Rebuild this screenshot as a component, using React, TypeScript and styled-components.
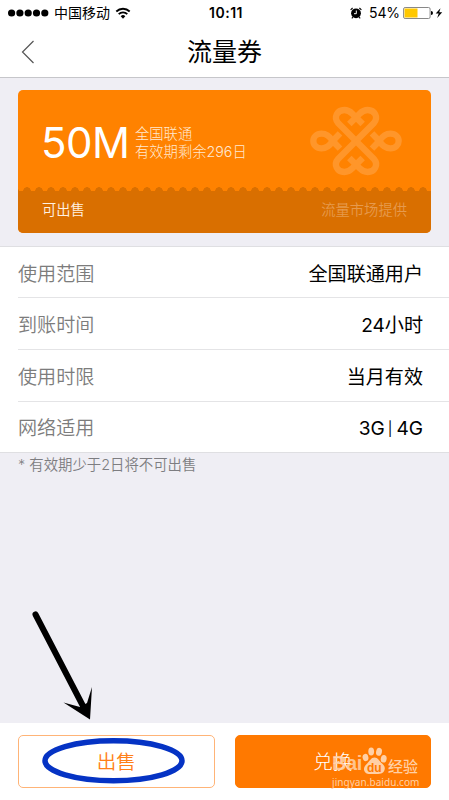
import React from "react";
import styled, { createGlobalStyle } from "styled-components";

const Global = createGlobalStyle`
  * { box-sizing: border-box; }
  body { margin: 0; background: #fff; }
`;

const Screen = styled.div`
  position: relative;
  width: 449px;
  height: 800px;
  overflow: hidden;
  display: flex;
  flex-direction: column;
  background: #efeef4;
  font-family: Inter, "Noto Sans CJK SC", sans-serif;
  color: #000;
  white-space: nowrap;
`;

const Header = styled.header`
  height: 78px;
  flex: none;
  background: #fff;
  border-bottom: 1px solid #c6c6ca;
`;

const StatusBar = styled.div`
  height: 25px;
  display: grid;
  grid-template-columns: 1fr auto 1fr;
  align-items: center;
  padding: 0 6px 0 8px;
  font-size: 14px;
  line-height: 25px;
`;

const Carrier = styled.div`
  display: flex;
  align-items: center;
  gap: 5px;
  height: 25px;
`;

const Clock = styled.div`
  padding-left: 1px;
  font-size: 14px;
  font-weight: 600;
  letter-spacing: 0.5px;
`;

const Power = styled.div`
  display: flex;
  align-items: center;
  justify-content: flex-end;
  height: 25px;
`;

const Percent = styled.span`
  margin: 0 3px 0 7px;
  letter-spacing: -0.1px;
`;

const NavBar = styled.div`
  height: 52px;
  display: grid;
  grid-template-columns: 60px 1fr 60px;
  align-items: center;
  text-align: center;
`;

const Back = styled.button`
  border: 0;
  background: none;
  padding: 0 0 0 21px;
  display: flex;
`;

const Title = styled.h1`
  margin: 0;
  padding-top: 1px;
  font-size: 25px;
  line-height: 52px;
  font-weight: 400;
`;

const Coupon = styled.section`
  margin: 12px 18px 0;
  height: 143px;
  flex: none;
  border-radius: 5px;
  overflow: hidden;
  background: #ff8200;
  color: #fff;
`;

const CouponTop = styled.div`
  height: 97px;
  display: flex;
  align-items: center;
  padding: 9px 29px 0 23px;
`;

const Amount = styled.div`
  width: 94px;
  font-size: 42px;
  line-height: 50px;
  font-weight: 370;
  letter-spacing: -0.5px;
`;

const Details = styled.div`
  flex: 1;
  font-size: 14.3px;
  line-height: 18px;
  font-weight: 300;
  color: #ffe8d0;
`;

const Knot = styled.svg`
  margin-top: -5px;
  flex: none;
`;

const CouponBottom = styled.div`
  height: 46px;
  padding: 7px 24px 0;
  display: flex;
  justify-content: space-between;
  font-size: 14.3px;
  line-height: 31px;
  background: radial-gradient(circle at 6px 4px, #d96f00 3.5px, transparent 4px) 3px 0 / 12px 4px repeat-x,
    linear-gradient(transparent 4px, #d96f00 4px);
`;

const Status = styled.span`
  color: #fff1e2;
  font-weight: 350;
`;

const Provider = styled.span`
  color: #e69a4d;
  font-weight: 350;
`;

const List = styled.dl`
  margin: 13px 0 0;
  height: 207px;
  flex: none;
  display: grid;
  grid-template-rows: 50px 52px 52px 51px;
  padding-left: 18px;
  background: #fff;
  border-top: 1px solid #dfdfe2;
  border-bottom: 1px solid #dfdfe2;
`;

const Row = styled.div`
  display: flex;
  align-items: center;
  justify-content: space-between;
  padding: 3px 26px 0 0;
  font-size: 19.1px;
  line-height: 28px;
  & + & { border-top: 1px solid #e4e4e6; }
  &:last-child { padding-top: 1px; }
`;

const Label = styled.dt`
  color: #7c7c7c;
  font-weight: 350;
`;

const Value = styled.dd`
  margin: 0;
  font-weight: 400;
`;

const Separator = styled.span`
  font-size: 14px;
  line-height: 1;
  margin: 0 4px 0 3px;
  vertical-align: 1px;
`;

const Note = styled.p`
  margin: 0;
  padding: 2px 18px;
  font-size: 14.4px;
  line-height: 20px;
  color: #7d7d81;
  font-weight: 350;
`;

const Footer = styled.footer`
  height: 77px;
  margin-top: auto;
  flex: none;
  display: flex;
  gap: 20px;
  padding: 12px 18px;
  background: #fff;
`;

const Action = styled.button<{ $filled?: boolean }>`
  flex: 1;
  height: 53px;
  padding: 1px 0 0;
  border: 1px solid ${(p) => (p.$filled ? "#ff7900" : "#ffb477")};
  border-radius: 5px;
  background: ${(p) => (p.$filled ? "#ff7900" : "#fff")};
  color: ${(p) => (p.$filled ? "#fff" : "#ff7f18")};
  font: ${(p) => (p.$filled ? 300 : 350)} 19.5px/50px Inter, "Noto Sans CJK SC", sans-serif;
`;

const Arrow = styled.svg`
  position: absolute;
  left: 30px;
  top: 605px;
`;

const Ring = styled.svg`
  position: absolute;
  left: 40px;
  top: 735px;
`;

const Watermark = styled.div`
  position: absolute;
  left: 332px;
  top: 743px;
  width: 90px;
  color: #ffd0a6;
`;

const Brand = styled.div`
  height: 32px;
  display: flex;
  align-items: flex-end;
  font: 700 20px/23px "Liberation Sans", sans-serif;
`;

const BrandName = styled.span`
  width: 30px;
  opacity: 0.85;
  letter-spacing: -0.4px;
`;

const BrandSuffix = styled.span`
  margin-left: 1px;
  font: 500 15px/19px "Noto Sans CJK SC", sans-serif;
`;

const Site = styled.div`
  margin-top: 1px;
  font: 400 10px/12px "Noto Sans", sans-serif;
  letter-spacing: 0.05px;
`;

const rows: [string, React.ReactNode][] = [
  ["使用范围", "全国联通用户"],
  ["到账时间", "24小时"],
  ["使用时限", "当月有效"],
  ["网络适用", <>3G<Separator>|</Separator>4G</>],
];

function SignalDots() {
  return (
    <svg width="41" height="8" viewBox="0 0 41 8">
      {[3.6, 11.9, 20.2, 28.5, 36.8].map((x) => (
        <circle key={x} cx={x} cy="4" r="3.6" />
      ))}
    </svg>
  );
}

function Wifi() {
  return (
    <svg width="16" height="12" viewBox="0 0 15 12" fill="none" stroke="#000" strokeWidth="1.8">
      <path d="M.8 4.5a9.5 9.5 0 0 1 13.4 0M3.2 7.1a6.1 6.1 0 0 1 8.6 0" />
      <path d="M5.2 9.2a3.3 3.3 0 0 1 4.6 0L7.5 11.7z" fill="#000" stroke="none" />
    </svg>
  );
}

function Alarm() {
  return (
    <svg width="12" height="12" viewBox="0 0 12 12">
      <circle cx="6" cy="6.3" r="4.9" />
      <path d="M.6 2.8 2.6 1M9.4 1l2 1.8M3 10 1.8 11.4M9 10l1.2 1.4" stroke="#000" strokeWidth="1.1" />
      <path d="M6.3 3.5v3.2H4" fill="none" stroke="#fff" strokeWidth="1" />
    </svg>
  );
}

function Battery() {
  return (
    <svg width="40" height="14" viewBox="0 0 40 14">
      <rect x=".6" y="1.5" width="26.5" height="11" rx="1.5" fill="#fff" stroke="#888" />
      <rect x="1.5" y="2.5" width="13" height="9" fill="#ffc800" />
      <path d="M28 5q2 0 2 2t-2 2z" />
      <path d="M37.5 2.2 32.7 7.6h3L34.2 12l5-5.7h-3z" />
    </svg>
  );
}

function Unicom() {
  return (
    <Knot width="92" height="70" viewBox="44 65 276 210" fill="none" stroke="#ff962a" strokeWidth="19">
      <path d="M182 170 129 117C113 99 126 77 147 77C158 77 165 82 171 88L202 119" />
      <path d="M182 170 235 117C251 99 238 77 217 77C206 77 199 82 193 88L162 119" />
      <path d="M182 170 129 223C113 241 126 263 147 263C158 263 165 258 171 252L202 221" />
      <path d="M182 170 235 223C251 241 238 263 217 263C206 263 199 258 193 252L162 221" />
      <path d="M134 193 112 170Q98 148 79 148C63 148 54 159 54 170S63 192 79 192Q98 192 112 170L134 147" />
      <path d="M230 193 252 170Q266 148 285 148C301 148 310 159 310 170S301 192 285 192Q266 192 252 170L230 147" />
    </Knot>
  );
}

function Paw() {
  return (
    <svg width="25" height="28" viewBox="0 0 25 28" fill="currentColor">
      <ellipse cx="3.5" cy="10.5" rx="2.9" ry="3.7" transform="rotate(-12 3.5 10.5)" />
      <ellipse cx="9.2" cy="4.5" rx="2.9" ry="4" />
      <ellipse cx="17" cy="4.8" rx="2.9" ry="4" transform="rotate(12 17 4.8)" />
      <ellipse cx="21.7" cy="11.8" rx="2.9" ry="3.8" transform="rotate(12 21.7 11.8)" />
      <path d="M12.5 10.5c3.5 0 4.8 3.5 7 5.5 2.5 2.3 4 4 3 7-1 4-5 4-9.5 4S3.5 28 2.2 23.5c-.9-3 1-5 3-7 2.5-2.3 3.8-6 7.3-6z" />
      <text x="5" y="24.5" fontFamily="Liberation Sans" fontSize="12" fontWeight="700" fill="#ff7900">
        du
      </text>
    </svg>
  );
}

export default function App() {
  return (
    <Screen>
      <Global />
      <Header>
        <StatusBar>
          <Carrier>
            <SignalDots />
            <span>中国移动</span>
            <Wifi />
          </Carrier>
          <Clock>10:11</Clock>
          <Power>
            <Alarm />
            <Percent>54%</Percent>
            <Battery />
          </Power>
        </StatusBar>
        <NavBar>
          <Back aria-label="返回">
            <svg width="14" height="24" viewBox="0 0 14 24" fill="none" stroke="#555" strokeWidth="1.2">
              <path d="M12.5 1 1.5 12l11 11" />
            </svg>
          </Back>
          <Title>流量券</Title>
        </NavBar>
      </Header>

      <Coupon>
        <CouponTop>
          <Amount>50M</Amount>
          <Details>
            <div>全国联通</div>
            <div>有效期剩余296日</div>
          </Details>
          <Unicom />
        </CouponTop>
        <CouponBottom>
          <Status>可出售</Status>
          <Provider>流量市场提供</Provider>
        </CouponBottom>
      </Coupon>

      <List>
        {rows.map(([label, value]) => (
          <Row key={label}>
            <Label>{label}</Label>
            <Value>{value}</Value>
          </Row>
        ))}
      </List>
      <Note>* 有效期少于2日将不可出售</Note>

      <Footer>
        <Action>出售</Action>
        <Action $filled>兑换</Action>
      </Footer>

      <Arrow width="65" height="116" viewBox="0 0 65 116">
        <path d="M5.5 9.5 53 101" stroke="#000" strokeWidth="6" strokeLinecap="round" />
        <path d="M60 114.5 33.5 97.5 50 102 57 98 62 82z" />
      </Arrow>
      <Ring width="147" height="52" viewBox="0 0 147 52">
        <ellipse cx="73.5" cy="25.7" rx="68.5" ry="20" fill="none" stroke="#0533c4" strokeWidth="5.5" />
      </Ring>
      <Watermark>
        <Brand>
          <BrandName>Bai</BrandName>
          <Paw />
          <BrandSuffix>经验</BrandSuffix>
        </Brand>
        <Site>jingyan.baidu.com</Site>
      </Watermark>
    </Screen>
  );
}
